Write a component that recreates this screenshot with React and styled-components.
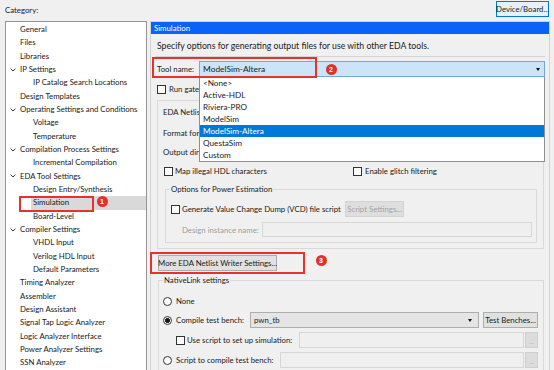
import React from "react";
import styled, { createGlobalStyle } from "styled-components";

const GlobalStyle = createGlobalStyle`
  html, body {
    margin: 0;
    padding: 0;
    background: #f0f0f0;
  }
  body {
    font-family: "Lato", "Noto Sans", sans-serif;
    font-size: 7.8px;
    color: #1a1a1a;
  }
`;

const Page = styled.div`
  position: relative;
  width: 554px;
  height: 370px;
  overflow: hidden;
  background: #f0f0f0;
`;

const TopBar = styled.div`
  display: flex;
  justify-content: space-between;
  align-items: flex-start;
  height: 21px;
  padding: 0 5px;
  box-sizing: border-box;
`;

const Caption = styled.div`
  margin-top: 3px;
  line-height: 14px;
`;

const PushButton = styled.div`
  box-sizing: border-box;
  height: ${(p) => p.$h || 16}px;
  width: ${(p) => (p.$w ? `${p.$w}px` : "auto")};
  margin-top: ${(p) => p.$top || 0}px;
  padding: 0 2px;
  display: flex;
  align-items: center;
  justify-content: center;
  white-space: nowrap;
  background: ${(p) => (p.$focused ? "#e5f1fb" : p.$disabled ? "#dedede" : "#e1e1e1")};
  border: 1px solid ${(p) => (p.$focused ? "#0078d7" : p.$disabled ? "#d3d3d3" : "#adadad")};
  color: ${(p) => (p.$disabled ? "#a3a3a3" : "#1a1a1a")};
  flex-shrink: 0;
`;

const Main = styled.div`
  display: flex;
  padding-left: 5px;
  height: 349px;
`;

const Tree = styled.div`
  box-sizing: border-box;
  width: 142px;
  height: 360px;
  background: #fff;
  border: 1px solid #959595;
  padding-top: 1px;
`;

const TreeRow = styled.div`
  display: flex;
  align-items: center;
  height: 13.33px;
  padding-left: ${(p) => (p.$level === 2 ? 17 : 4)}px;
  white-space: nowrap;
`;

const ChevronSlot = styled.div`
  width: 10px;
  flex-shrink: 0;
  display: flex;
  align-items: center;
`;

const TreeLabel = styled.span`
  flex: 1;
  line-height: 13.33px;
  margin-left: -2px;
  padding-left: 2px;
  background: ${(p) => (p.$selected ? "#d9d9d9" : "transparent")};
`;

const Panel = styled.div`
  box-sizing: border-box;
  width: 400px;
  height: 360px;
  margin-left: 3px;
  border: 1px solid #d2d2d2;
  display: flex;
  flex-direction: column;
`;

const PanelHeader = styled.div`
  height: 12px;
  line-height: 12px;
  background: #0a62f6;
  color: #fff;
  padding-left: 3px;
`;

const PanelBody = styled.div`
  padding: 0 4px;
  display: flex;
  flex-direction: column;
`;

const Description = styled.div`
  margin: 5px 0 0 2px;
  height: 14px;
  line-height: 14px;
  font-size: 8.7px;
  white-space: nowrap;
`;

const Rule = styled.div`
  margin-top: 3px;
  height: 1px;
  background: #d4d4d4;
`;

const Row = styled.div`
  display: flex;
  align-items: center;
  height: ${(p) => p.$h || 14}px;
  margin-top: ${(p) => p.$mt || 0}px;
  padding-left: ${(p) => p.$pl || 0}px;
  padding-right: ${(p) => p.$pr || 0}px;
  white-space: nowrap;
`;

const FieldLabel = styled.span`
  width: ${(p) => p.$w}px;
  flex-shrink: 0;
  color: ${(p) => (p.$disabled ? "#9c9c9c" : "inherit")};
`;

const ComboWrap = styled.div`
  position: relative;
  flex: 1;
  height: 100%;
  margin-right: ${(p) => p.$mr || 0}px;
`;

const Combo = styled.div`
  box-sizing: border-box;
  height: 100%;
  display: flex;
  align-items: center;
  justify-content: space-between;
  padding: 0 3px;
  background: ${(p) => (p.$active ? "#cce4f7" : "#e5e5e5")};
  border: 1px solid ${(p) => (p.$active ? "#6fa9e0" : "#adadad")};
`;

const ComboText = styled.span`
  font-size: ${(p) => (p.$active ? "8.4px" : "inherit")};
`;

const Arrow = styled.span`
  width: 0;
  height: 0;
  border-left: 2.5px solid transparent;
  border-right: 2.5px solid transparent;
  border-top: 3px solid #111;
  margin-right: ${(p) => p.$mr || 1}px;
`;

const DropList = styled.div`
  position: absolute;
  top: 100%;
  left: 0;
  right: 0;
  z-index: 5;
  background: #fff;
  border: 1px solid #8f8f8f;
  border-top: none;
`;

const DropItem = styled.div`
  height: 12px;
  line-height: 12px;
  padding-left: 3px;
  font-size: 8.2px;
  background: ${(p) => (p.$selected ? "#0078d7" : "transparent")};
  color: ${(p) => (p.$selected ? "#fff" : "#1a1a1a")};
`;

const CheckBox = styled.span`
  box-sizing: border-box;
  width: 9px;
  height: 9px;
  flex-shrink: 0;
  border: 1px solid #333;
  background: #fff;
  margin-right: ${(p) => p.$gap || 2}px;
`;

const Radio = styled.span`
  box-sizing: border-box;
  width: 9px;
  height: 9px;
  flex-shrink: 0;
  border-radius: 50%;
  border: 1px solid #333;
  background: ${(p) =>
    p.$checked ? "radial-gradient(circle, #1a1a1a 0 2.2px, #fff 2.6px)" : "#fff"};
  margin-right: 4px;
`;

const CheckItem = styled.div`
  display: flex;
  align-items: center;
  width: ${(p) => (p.$w ? `${p.$w}px` : "auto")};
  flex-shrink: 0;
`;

const GroupBox = styled.div`
  position: relative;
  box-sizing: border-box;
  border: 1px solid #d9d9d9;
  margin: ${(p) => p.$m};
  padding-bottom: 5px;
  display: flex;
  flex-direction: column;
`;

const GroupTitle = styled.span`
  position: absolute;
  top: -7px;
  left: 4px;
  padding: 0 1px;
  line-height: 13px;
  background: #f0f0f0;
`;

const TextField = styled.div`
  box-sizing: border-box;
  height: 100%;
  width: ${(p) => (p.$w ? `${p.$w}px` : "auto")};
  flex: ${(p) => (p.$w ? "none" : 1)};
  background: #efefef;
  border: 1px solid #d6d6d6;
`;

const Dots = styled.div`
  box-sizing: border-box;
  width: 13px;
  height: 100%;
  margin-left: 1px;
  display: flex;
  align-items: flex-end;
  justify-content: center;
  padding-bottom: 2px;
  background: #dcdcdc;
  border: 1px solid #cfcfcf;
  color: #a8a8a8;
  font-size: 6px;
  flex-shrink: 0;
`;

const Marker = styled.div`
  position: absolute;
  box-sizing: border-box;
  left: ${(p) => p.$x}px;
  top: ${(p) => p.$y}px;
  width: ${(p) => p.$w}px;
  height: ${(p) => p.$h}px;
  border: 2px solid #e5322d;
  z-index: 10;
`;

const Badge = styled.div`
  position: absolute;
  left: ${(p) => p.$x - 5.5}px;
  top: ${(p) => p.$y - 5.5}px;
  width: 11px;
  height: 11px;
  border-radius: 50%;
  background: #e2302b;
  color: #fff;
  font-family: "Liberation Sans", sans-serif;
  font-weight: bold;
  font-size: 7px;
  line-height: 11px;
  text-align: center;
  z-index: 10;
`;

const Chevron = () => (
  <svg width="6" height="4" viewBox="0 0 6 4">
    <polyline points="0.6,0.6 3,3 5.4,0.6" fill="none" stroke="#3a3a3a" strokeWidth="1" />
  </svg>
);

const treeItems = [
  ["General", 1],
  ["Files", 1],
  ["Libraries", 1],
  ["IP Settings", 1, true],
  ["IP Catalog Search Locations", 2],
  ["Design Templates", 1],
  ["Operating Settings and Conditions", 1, true],
  ["Voltage", 2],
  ["Temperature", 2],
  ["Compilation Process Settings", 1, true],
  ["Incremental Compilation", 2],
  ["EDA Tool Settings", 1, true],
  ["Design Entry/Synthesis", 2],
  ["Simulation", 2, false, true],
  ["Board-Level", 2],
  ["Compiler Settings", 1, true],
  ["VHDL Input", 2],
  ["Verilog HDL Input", 2],
  ["Default Parameters", 2],
  ["Timing Analyzer", 1],
  ["Assembler", 1],
  ["Design Assistant", 1],
  ["Signal Tap Logic Analyzer", 1],
  ["Logic Analyzer Interface", 1],
  ["Power Analyzer Settings", 1],
  ["SSN Analyzer", 1],
];

const tools = ["<None>", "Active-HDL", "Riviera-PRO", "ModelSim", "ModelSim-Altera", "QuestaSim", "Custom"];

export default function App() {
  return (
    <Page>
      <GlobalStyle />
      <TopBar>
        <Caption>Category:</Caption>
        <PushButton $focused $w={53} $top={1}>Device/Board...</PushButton>
      </TopBar>
      <Main>
        <Tree>
          {treeItems.map(([name, level, expanded, selected]) => (
            <TreeRow key={name} $level={level}>
              <ChevronSlot>{expanded && <Chevron />}</ChevronSlot>
              <TreeLabel $selected={selected}>{name}</TreeLabel>
            </TreeRow>
          ))}
        </Tree>
        <Panel>
          <PanelHeader>Simulation</PanelHeader>
          <PanelBody>
            <Description>Specify options for generating output files for use with other EDA tools.</Description>
            <Rule />
            <Row $h={16} $mt={4} $pl={2}>
              <FieldLabel $w={42}>Tool name:</FieldLabel>
              <ComboWrap>
                <Combo $active>
                  <ComboText $active>ModelSim-Altera</ComboText>
                  <Arrow />
                </Combo>
                <DropList>
                  {tools.map((t) => (
                    <DropItem key={t} $selected={t === "ModelSim-Altera"}>{t}</DropItem>
                  ))}
                </DropList>
              </ComboWrap>
            </Row>
            <Row $mt={5} $pl={2}>
              <CheckBox $gap={3} />
              <span>Run gate</span>
            </Row>
            <GroupBox $m="4px 1px 0 2px">
              <Row $mt={4} $pl={5}>EDA Netlis</Row>
              <Row $h={16} $mt={6} $pl={5}>Format for</Row>
              <Row $h={16} $mt={3} $pl={5}>Output dir</Row>
              <Row $mt={4} $pl={6}>
                <CheckItem $w={189}>
                  <CheckBox />
                  <span>Map illegal HDL characters</span>
                </CheckItem>
                <CheckItem>
                  <CheckBox $gap={3} />
                  <span>Enable glitch filtering</span>
                </CheckItem>
              </Row>
              <GroupBox $m="11px 6px 0 7px">
                <GroupTitle>Options for Power Estimation</GroupTitle>
                <Row $h={16} $mt={11} $pl={5}>
                  <CheckBox />
                  <FieldLabel $w={163}>Generate Value Change Dump (VCD) file script</FieldLabel>
                  <PushButton $disabled $w={59}>Script Settings...</PushButton>
                </Row>
                <Row $h={15} $mt={5} $pl={16}>
                  <FieldLabel $w={80} $disabled>Design instance name:</FieldLabel>
                  <TextField $w={270} />
                </Row>
              </GroupBox>
            </GroupBox>
            <Row $h={16} $mt={6} $pl={3}>
              <PushButton $w={119}>More EDA Netlist Writer Settings...</PushButton>
            </Row>
            <GroupBox $m="9px 1px 0 3px">
              <GroupTitle>NativeLink settings</GroupTitle>
              <Row $mt={13} $pl={4}>
                <Radio />
                <span>None</span>
              </Row>
              <Row $h={16} $mt={4} $pl={4} $pr={5}>
                <Radio $checked />
                <FieldLabel $w={74}>Compile test bench:</FieldLabel>
                <ComboWrap $mr={4}>
                  <Combo>
                    <ComboText>pwn_tb</ComboText>
                    <Arrow $mr={3} />
                  </Combo>
                </ComboWrap>
                <PushButton $w={55}>Test Benches...</PushButton>
              </Row>
              <Row $h={16} $mt={4} $pl={17} $pr={5}>
                <CheckBox />
                <FieldLabel $w={112}>Use script to set up simulation:</FieldLabel>
                <TextField />
                <Dots>...</Dots>
              </Row>
              <Row $h={16} $mt={4} $pl={4} $pr={5}>
                <Radio />
                <FieldLabel $w={104}>Script to compile test bench:</FieldLabel>
                <TextField />
                <Dots>...</Dots>
              </Row>
            </GroupBox>
          </PanelBody>
        </Panel>
      </Main>
      <Marker $x={19} $y={196} $w={75} $h={16} />
      <Badge $x={102} $y={201}>1</Badge>
      <Marker $x={152} $y={57} $w={165} $h={21} />
      <Badge $x={331} $y={69}>2</Badge>
      <Marker $x={150} $y={252} $w={155} $h={22} />
      <Badge $x={321} $y={260}>3</Badge>
    </Page>
  );
}
